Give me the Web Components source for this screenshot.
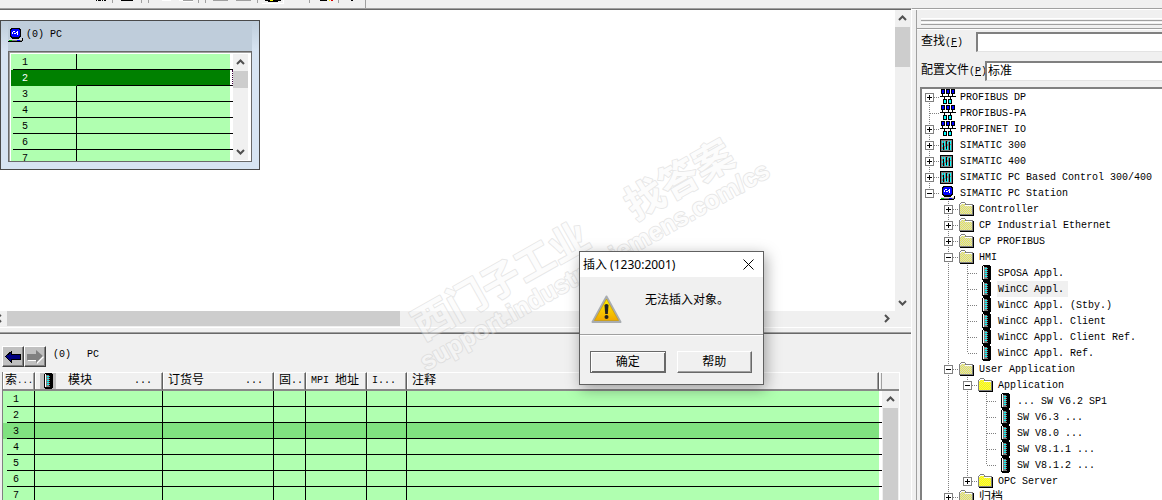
<!DOCTYPE html>
<html lang="zh-CN">
<head>
<meta charset="utf-8">
<title>HW Config</title>
<style>
html, body { margin: 0; height: 100%; overflow: hidden; background: #f0f0f0; }
body { font: 12px/16px "Liberation Mono", "Noto Sans CJK SC", monospace; color: #000; }
</style>
</head>
<body>
<step-workbench></step-workbench>
<script>
const ICONS = {
  net: `<svg width="16" height="16" viewBox="0 0 16 16" shape-rendering="crispEdges"><path d="M1 0h4v5H1zM6 0h4v5H6zM11 0h4v5h-4zM0 7h16v1H0zM2 5h1v2H2zM8 5h1v2H8zM12 5h1v2h-1zM4 8h1v2H4zM10 8h1v2h-1zM3 10h4v5H3zM8 10h4v5H8z"/><path fill="#00f" d="M2 1h2v3H2zM7 1h2v3H7zM12 1h2v3h-2z"/><path fill="#0ff" d="M4 11h2v3H4zM9 11h2v3H9z"/></svg>`,
  rack: `<svg width="16" height="16" viewBox="0 0 16 16" shape-rendering="crispEdges"><path d="M0 2h13v13H0z"/><path fill="#808080" d="M1 3h11v11H1z"/><path fill="#0ff" d="M2 4h1v2H2zM2 8h1v2H2zM2 12h1v1H2zM4 4h1v5H4zM7 5h1v2H7zM8 4h1v1H8zM7 9h1v4H7zM10 4h1v3h-1zM10 8h1v5h-1zM5 10h1v3H5z"/><path fill="#000" d="M3 6h1v7H3zM6 4h1v8H6zM9 5h1v8H9z"/></svg>`,
  pc: `<svg width="16" height="16" viewBox="0 0 16 16" shape-rendering="crispEdges"><path d="M3 1h9v1h1v8h-1v1H3v-1H2V2h1zM4 11h7v1H4z"/><path fill="#00f" d="M4 2h7v1h1v6h-1v1H4V9H3V3h1z"/><path fill="#fff" d="M5 4h2v1H5zM4 5h1v2H4zM6 6h2v1H6zM9 4h1v4H9zM8 5h1v1H8z"/><path fill="#e0e0e0" d="M1 12h13v1H1z"/><path fill="#808080" d="M1 13h13v1H1z"/><path fill="#00c000" d="M1 13h3v1H1z"/><path fill="#00f" d="M9 13h3v1H9z"/><path d="M0 14h14v1H0zM14 11h1v3h-1z"/></svg>`,
  folder: `<svg width="16" height="16" viewBox="0 0 16 16" shape-rendering="crispEdges"><defs><pattern id="d" width="2" height="2" patternUnits="userSpaceOnUse"><path fill="#d4d4d4" d="M0 0h2v2H0z"/><path fill="#ecec48" d="M0 0h1v1H0zM1 1h1v1H1z"/></pattern></defs><path fill="#808080" d="M1 2h1V1h4v1h1v1h7v11H0V3h1z"/><path fill="#fff" d="M2 2h4v2h7v1H1V3h1z"/><path fill="url(#d)" d="M2 3h4v2h7v8H1V4h1z"/><path d="M14 4h1v11H1v-1h13z"/></svg>`,
  module: `<svg width="16" height="16" viewBox="0 0 16 16" shape-rendering="crispEdges"><path d="M5 0h7v1h1v14h-1v1H5v-1H4V1h1z"/><path fill="#fff" d="M5 1h1v13H5z"/><path fill="#808080" d="M6 2h4v12H6z"/><path fill="#0ff" d="M7 3h2v1H7zM7 5h2v1H7zM7 7h2v1H7zM7 9h2v1H7zM7 11h2v1H7z"/><path d="M9 2h1v1H9zM9 4h1v1H9zM9 6h1v1H9zM9 8h1v1H9zM9 10h1v1H9zM9 12h1v1H9z"/></svg>`
};
ICONS.open = ICONS.folder.replace('#d4d4d4', '#f0f060').replace('#ecec48', '#ff0');

const define = (name, html, init) => {
  const t = document.createElement('template');
  t.innerHTML = html;
  customElements.define(name, class extends HTMLElement {
    connectedCallback() {
      if (this.shadowRoot) return;
      this.attachShadow({ mode: 'open' }).append(t.content.cloneNode(true));
      if (init) init.call(this, this.shadowRoot);
    }
  });
};

define('win-scrollbar', `<style>
:host { display: flex; flex-direction: column; width: 15px; flex: none; background: #f0f0f0; overflow: hidden; }
:host([horizontal]) { flex-direction: row; width: auto; height: 15px; }
button { all: unset; display: flex; align-items: center; justify-content: center; width: 15px; height: 17px; flex: none; }
:host([horizontal]) button { width: 17px; height: 15px; }
:host([horizontal]) button:first-of-type { width: 7px; justify-content: flex-start; }
.track { flex: 1; min-height: 0; }
.thumb { background: #cdcdcd; width: 100%; height: var(--thumb, 20px); }
:host([horizontal]) .thumb { width: var(--thumb); height: 100%; }
svg { fill: none; stroke: #505050; stroke-width: 2; }
</style><button aria-label="后退"><svg width="9" height="9"></svg></button><div class="track"><div class="thumb"></div></div><button aria-label="前进"><svg width="9" height="9"></svg></button>`, function (r) {
  const h = this.hasAttribute('horizontal');
  const [a, b] = r.querySelectorAll('svg');
  a.innerHTML = `<path d="${h ? 'M1 1L-3 4L1 8' : 'M1 6L4.500 2.500L8 6'}"/>`;
  b.innerHTML = `<path d="${h ? 'M3 1L6.500 4.500L3 8' : 'M1 3L4.500 6.500L8 3'}"/>`;
});

define('main-toolbar', `<style>
:host { display: block; height: 8px; background: #f0f0f0; overflow: hidden; }
svg { display: block; }
</style><svg width="400" height="8" shape-rendering="crispEdges" aria-hidden="true">
<path d="M96 0h1v1h-1zM98 0h3v1h-3zM102 0h1v1h-1zM104 0h2v1h-2zM121 0h12v1h-12zM265 0h16v1h-16zM268 1h10v1h-10zM320 0h7v1h-7zM351 0h2v1h-2z"/>
<path fill="#a0a0a0" d="M112 0h1v3h-1zM141 0h1v3h-1zM148 0h1v3h-1zM183 0h10v1h-10zM198 0h1v3h-1zM205 0h1v3h-1zM213 0h15v1h-15zM236 0h15v1h-15zM257 0h1v3h-1zM309 0h1v3h-1zM338 0h1v3h-1zM365 0h1v8h-1z"/>
<path fill="#fff" d="M162 0h9v1h-9zM179 0h4v1h-4zM183 1h10v1h-10zM262 3h22v1h-22zM283 0h1v4h-1z"/>
<path fill="#ff0" d="M270 0h3v1h-3zM329 0h1v1h-1z"/><path fill="#d00" d="M331 0h2v1h-2z"/></svg>`);

define('station-window', `<style>
:host { display: block; box-sizing: border-box; width: 260px; height: 150px; border: 1px solid #4a4a4a; padding: 1px 7px 7px; background: linear-gradient(#bfcddb, #d7e4f2 30px); }
header { display: flex; align-items: center; box-sizing: border-box; height: 29px; padding-bottom: 3px; background: #bfcddb; font-size: 10px; gap: 2px; white-space: pre; }
.body { display: flex; box-sizing: border-box; height: 111px; border: 1px solid #696969; box-shadow: inset 1px 1px #a0a0a0; padding: 2px 3px 1px 2px; background: #fff; overflow: hidden; }
table { border-collapse: separate; border-spacing: 0; table-layout: fixed; width: 222px; flex: none; }
td { padding: 0; height: 15px; line-height: 15px; font-size: 10px; background: #b0ffb0; border-bottom: 1px solid #000; }
td:nth-child(1) { padding-left: 11px; border-right: 1px solid #000; border-bottom: 0; background: linear-gradient(#000,#000) 2px 100%/100% 1px no-repeat, #b0ffb0; height: 16px; }
td:nth-child(3) { background: #fff; }
.on td:nth-child(1) { background: #008000; color: #fff; border-color: #008000; }
.on td:nth-child(2) { background: #008000; }
.on td:nth-child(3) { border-right: 1px dotted #400040; }
win-scrollbar { margin-left: auto; }
</style><header><svg-icon name="pc"></svg-icon><span>(0) PC</span></header>
<div class="body"><table><colgroup><col style="width:66px"><col><col style="width:3px"></colgroup><tbody></tbody></table><win-scrollbar style="--thumb:17px"></win-scrollbar></div>`, function (r) {
  r.querySelector('tbody').innerHTML = [1,2,3,4,5,6,7].map(n => `<tr${n === 2 ? ' class="on"' : ''}><td>${n}</td><td></td><td></td></tr>`).join('');
});

define('svg-icon', `<style>:host { display: block; width: 16px; height: 16px; flex: none; } svg { display: block; }</style>`, function (r) {
  r.innerHTML += ICONS[this.getAttribute('name')] || '';
});

define('detail-panel', `<style>
:host { display: flex; flex-direction: column; min-height: 0; background: #f0f0f0; }
.bar { display: flex; height: 26px; padding: 12px 0 0 2px; font-size: 10px; line-height: 18px; }
.bar button { all: unset; box-sizing: border-box; width: 22px; height: 21px; background: #c0c0c0; border: 1px solid; border-color: #fff #404040 #404040 #fff; box-shadow: inset -1px -1px #808080; }
.bar button svg { display: block; }
.bar span { margin-left: 7px; }
.bar span + span { margin-left: 16px; }
.grid { display: flex; flex: 1; min-height: 0; overflow: hidden; margin: 0 11px 0 2px; border-left: 1px solid #808080; align-items: flex-start; }
table { flex: 1; width: 100%; border-collapse: separate; border-spacing: 0; table-layout: fixed; background: #b0ffb0; }
th { box-sizing: border-box; height: 19px; padding: 0 4px 0 5px; font-weight: normal; text-align: left; line-height: 18px; background: #f0f0f0; border-top: 1px solid #fff; border-bottom: 2px solid #888; border-right: 1px solid #606060; box-shadow: inset 1px 0 #fff, inset -1px 0 #a0a0a0; white-space: nowrap; overflow: hidden; }
th:first-child { padding: 0 0 0 2px; }
th:first-child small { font-size: 9px; }
th:last-child { border-right: 0; padding: 0; }
th div { display: flex; align-items: center; height: 16px; }
th small, th b { font: 10px/18px "Liberation Mono", monospace; }
th .end { margin-left: auto; margin-right: 6px; }
th svg-icon { background: #c0c0c0; margin-right: 12px; height: 16px; }
td { box-sizing: border-box; height: 16px; padding: 0; line-height: 15px; font-size: 10px; background: var(--row, #b0ffb0); border-right: 1px solid #000; border-bottom: 1px solid #000; }
td:first-child { padding-left: 10px; border-bottom: 0; background: linear-gradient(#000,#000) 4px 100%/100% 1px no-repeat, var(--row, #b0ffb0); }
td:nth-child(7) { border-right: 0; }
td:last-child { background: #fff; border-right: 0; }
.on { --row: #80e280; }
.side { width: 17px; align-self: stretch; display: flex; flex-direction: column; flex: none; background: #f0f0f0; border-right: 1px solid #fff; overflow: hidden; }
.side i { height: 16px; border-top: 1px solid #fff; border-bottom: 2px solid #888; flex: none; }
win-scrollbar { flex: none; height: 100%; margin: 0 1px; }
</style>
<div class="bar"><button aria-label="后退"><svg width="20" height="19" shape-rendering="crispEdges"><path fill="#000080" stroke="#000" d="M2.500 9.500L8.500 4.500V7.500H17.500V12.500H8.500V15.500Z"/></svg></button><button aria-label="前进"><svg width="20" height="19"><path fill="#fff" d="M19 10L12 17V14H3V8H12V5Z"/><path fill="#808080" d="M18 9L11 16V13H2V7H11V3Z"/></svg></button><span>(0)</span><span>PC</span></div>
<div class="grid"><table><colgroup><col style="width:32px"><col style="width:128px"><col style="width:111px"><col style="width:32px"><col style="width:61px"><col style="width:40px"><col><col style="width:3px"></colgroup>
<thead><tr><th><div>索<small>...</small></div></th><th><div><svg-icon name="module"></svg-icon>模块<small class="end">...</small></div></th><th><div>订货号<small class="end">...</small></div></th><th><div>固<small>..</small></div></th><th><div><b>MPI&nbsp;</b>地址</div></th><th><div><b>I...</b></div></th><th><div>注释</div></th><th></th></tr></thead><tbody></tbody></table>
<div class="side"><i></i><win-scrollbar style="--thumb:200px"></win-scrollbar></div></div>`, function (r) {
  r.querySelector('tbody').innerHTML = [1,2,3,4,5,6,7].map(n => `<tr${n === 3 ? ' class="on"' : ''}><td>${n}</td>${'<td></td>'.repeat(7)}</tr>`).join('');
});

/* guides: one digit per ancestor level, 1 where that branch continues below */
define('tree-item', `<style>
:host { display: flex; height: 16px; flex: none; white-space: pre; font-size: 10px; }
:host { --dots: repeating-linear-gradient(#808080 0 1px, transparent 1px 2px); }
i { width: 19px; flex: none; }
i.v { background: var(--dots) 7px 0/1px 100% no-repeat; }
.join { width: 18px; flex: none; background: repeating-linear-gradient(90deg, #808080 0 1px, transparent 1px 2px) 8px 8px/10px 1px no-repeat, var(--dots) 7px var(--from, 0px)/1px var(--len, 16px) no-repeat; }
:host([last]) .join { --len: 8px; }
:host([first]) .join { --from: 8px; }
button { all: unset; display: block; margin: 4px 0 0 3px; width: 7px; height: 7px; border: 1px solid #808080; background: linear-gradient(#000,#000) 1px 3px/5px 1px no-repeat, var(--plus, linear-gradient(#0000,#0000)) 3px 1px/1px 5px no-repeat, #fff; }
button[aria-expanded="false"] { --plus: linear-gradient(#000,#000); }
.text { margin-left: 3px; padding: 0 4px 0 1px; line-height: 18px; }
:host([selected]) .text { background: #f0f0f0; }
:host([cjk]) .text { font-size: 12px; }
</style>`, function (r) {
  for (const g of this.getAttribute('guides') || '') {
    const i = document.createElement('i');
    if (g === '1') i.className = 'v';
    r.append(i);
  }
  const e = this.getAttribute('state');
  r.append(document.createRange().createContextualFragment(
    `<div class="join">${e ? `<button aria-label="展开" aria-expanded="${e === 'open'}"></button>` : ''}</div><svg-icon name="${this.getAttribute('icon')}"></svg-icon><span class="text"><slot></slot></span>`));
  this.setAttribute('role', 'treeitem');
});

define('catalog-panel', `<style>
:host { display: flex; flex-direction: column; min-width: 0; background: #f0f0f0; border-left: 1px solid #a0a0a0; margin-left: 4px; overflow: hidden; }
.grip { height: 18px; margin-left: 4px; background: linear-gradient(#fff,#fff) 0 8px/100% 1px no-repeat, linear-gradient(#a0a0a0,#a0a0a0) 0 10px/100% 1px no-repeat, linear-gradient(#fff,#fff) 0 12px/100% 1px no-repeat, linear-gradient(#a0a0a0,#a0a0a0) 0 14px/100% 1px no-repeat; }
.rule { height: 1px; background: #a0a0a0; border-bottom: 1px solid #fff; }
.field { display: flex; align-items: center; height: 22px; padding-left: 4px; }
.find { padding-top: 1px; margin-bottom: 7px; }
label { width: 55px; flex: none; white-space: nowrap; line-height: 18px; padding-top: 1px; }
label span { font-size: 10px; }
.profile label { width: 64px; overflow: hidden; }
input, select { box-sizing: border-box; flex: 1; min-width: 0; height: 20px; margin: 0; padding: 1px 1px 0; border: 0; border-top: 2px solid #808080; border-left: 2px solid #808080; border-bottom: 1px solid #e3e3e3; border-radius: 0; background: #fff; font: 12px/16px "Liberation Mono","Noto Sans CJK SC",monospace; color: #000; appearance: none; outline: 0; }
.tree { flex: 1; min-height: 0; margin: 5px 0 0 3px; border-top: 2px solid #808080; border-left: 2px solid #808080; background: #fff; overflow: hidden; }
</style>
<div class="grip"></div><div class="rule"></div>
<div class="field find"><label for="q">查找<span>(<u>F</u>)</span></label><input id="q" type="text"></div>
<div class="field profile"><label for="p">配置文件<span>(<u>P</u>)</span></label><select id="p"><option>标准</option></select></div>
<div class="tree" role="tree" aria-label="硬件目录"><slot></slot></div>`);

define('message-dialog', `<style>
:host { display: block; box-sizing: border-box; width: 185px; border: 1px solid #606060; background: #f0f0f0; box-shadow: 2px 4px 14px rgba(0,0,0,.35); }
header { display: flex; align-items: center; justify-content: space-between; height: 25px; padding: 0 9px 0 3px; background: #fff; font: 12px/16px "Noto Sans","Noto Sans CJK SC",sans-serif; }
header button { all: unset; display: block; }
header svg { display: block; }
.msg { display: flex; height: 57px; border-bottom: 1px solid #a0a0a0; padding-left: 11px; gap: 23px; }
.msg svg { margin-top: 18px; flex: none; }
.msg p { margin: 16px 0 0; white-space: nowrap; }
footer { display: flex; gap: 11px; border-top: 1px solid #fff; padding: 15px 11px 11px 10px; }
footer button { box-sizing: border-box; flex: 1; height: 22px; margin: 0; padding: 2px 0 0; border: 1px solid; border-color: #fff #696969 #696969 #fff; box-shadow: inset -1px -1px #a0a0a0; border-radius: 0; background: #f0f0f0; color: #000; font: 12px/16px "Liberation Mono","Noto Sans CJK SC",monospace; }
footer button.default { border-color: #696969; box-shadow: inset 1px 1px #fff, inset -1px -1px #696969; }
</style>
<header><span id="t">插入 (1230:2001)</span><button aria-label="关闭"><svg width="11" height="11"><path d="M.5 .5L10.500 10.500M10.500 .5L.5 10.500" stroke="#000" fill="none"/></svg></button></header>
<div class="msg"><svg width="31" height="29" viewBox="0 0 31 29"><defs><linearGradient id="y" x2="0" y2="1"><stop stop-color="#fff000"/><stop offset="1" stop-color="#f0a800"/></linearGradient></defs><path d="M15.500 1.500L29.500 27H1.500Z" fill="#b8bcc0" stroke="#a8acb0" stroke-width="2" stroke-linejoin="round"/><path d="M15.500 4L27.500 25.500H3.500Z" fill="url(#y)" stroke="#c89800" stroke-width=".7"/><path d="M13.500 10Q15.500 8 17.500 10L16.800 19H14.200Z" fill="#222"/><circle cx="15.500" cy="22" r="2" fill="#222"/></svg><p><slot></slot></p></div>
<footer><button class="default">确定</button><button>帮助</button></footer>`, function () { this.setAttribute('role', 'dialog'); });

define('water-mark', `<style>
:host { display: block; width: 380px; height: 270px; pointer-events: none; opacity: .42; }
svg { display: block; overflow: visible; }
text { fill: #fafafa; stroke: #c8c8c8; stroke-width: 2px; paint-order: stroke; stroke-linejoin: round; }
.cn { font: bold 39px "Noto Sans CJK SC", sans-serif; }
.url { font: bold 25px "Liberation Sans", sans-serif; }
</style><svg width="380" height="270" aria-hidden="true"><g transform="translate(26 261) rotate(-29.500)"><text class="cn" x="12" y="-28">西门子工业</text><text class="cn" x="256" y="-28">找答案</text><text class="url" x="0" y="0">support.industry.siemens.com/cs</text></g></svg>`);

define('step-workbench', `<style>
:host { display: flex; flex-direction: column; height: 100vh; overflow: hidden; position: relative; }
.main { display: grid; grid-template-columns: minmax(0, 1fr) 250px; flex: 1; min-height: 0; }
.left { display: grid; grid-template-rows: 324px minmax(0, 1fr); min-height: 0; border-top: 1px solid #a0a0a0; border-right: 1px solid #fff; }
.view { display: grid; grid-template-columns: minmax(0, 1fr) 15px; grid-template-rows: minmax(0, 1fr) 15px; box-sizing: border-box; border-top: 1px solid #696969; border-bottom: 1px solid #a0a0a0; padding: 0 1px 6px 0; background: #f0f0f0; box-shadow: inset 0 -4px #f0f0f0, inset 0 -5px #fff; }
.canvas { background: #fff; padding-top: 10px; }
detail-panel { border-top: 1px solid #696969; }
.right { display: grid; min-height: 0; border-top: 1px solid #a0a0a0; box-shadow: inset 0 1px #fff; padding-top: 1px; }
water-mark { position: absolute; left: 400px; top: 110px; }
message-dialog { position: absolute; left: 579px; top: 251px; }
</style>
<main-toolbar></main-toolbar>
<div class="main">
<div class="left"><div class="view"><div class="canvas"><station-window></station-window></div><win-scrollbar style="--thumb:40px"></win-scrollbar><win-scrollbar horizontal style="--thumb:393px"></win-scrollbar></div><detail-panel></detail-panel></div>
<div class="right"><catalog-panel>
<tree-item first state="closed" icon="net">PROFIBUS DP</tree-item>
<tree-item icon="net">PROFIBUS-PA</tree-item>
<tree-item state="closed" icon="net">PROFINET IO</tree-item>
<tree-item state="closed" icon="rack">SIMATIC 300</tree-item>
<tree-item state="closed" icon="rack">SIMATIC 400</tree-item>
<tree-item state="closed" icon="rack">SIMATIC PC Based Control 300/400</tree-item>
<tree-item last state="open" icon="pc">SIMATIC PC Station</tree-item>
<tree-item guides="0" state="closed" icon="folder">Controller</tree-item>
<tree-item guides="0" state="closed" icon="folder">CP Industrial Ethernet</tree-item>
<tree-item guides="0" state="closed" icon="folder">CP PROFIBUS</tree-item>
<tree-item guides="0" state="open" icon="folder">HMI</tree-item>
<tree-item guides="01" icon="module">SPOSA Appl.</tree-item>
<tree-item guides="01" selected icon="module">WinCC Appl.</tree-item>
<tree-item guides="01" icon="module">WinCC Appl. (Stby.)</tree-item>
<tree-item guides="01" icon="module">WinCC Appl. Client</tree-item>
<tree-item guides="01" icon="module">WinCC Appl. Client Ref.</tree-item>
<tree-item guides="01" last icon="module">WinCC Appl. Ref.</tree-item>
<tree-item guides="0" state="open" icon="folder">User Application</tree-item>
<tree-item guides="01" state="open" icon="open">Application</tree-item>
<tree-item guides="011" icon="module">... SW V6.2 SP1</tree-item>
<tree-item guides="011" icon="module">SW V6.3 ...</tree-item>
<tree-item guides="011" icon="module">SW V8.0 ...</tree-item>
<tree-item guides="011" icon="module">SW V8.1.1 ...</tree-item>
<tree-item guides="011" last icon="module">SW V8.1.2 ...</tree-item>
<tree-item guides="01" last state="closed" icon="open">OPC Server</tree-item>
<tree-item guides="0" cjk state="closed" icon="folder">归档</tree-item>
</catalog-panel></div>
</div>
<water-mark></water-mark>
<message-dialog>无法插入对象。</message-dialog>`);
</script>
</body>
</html>
